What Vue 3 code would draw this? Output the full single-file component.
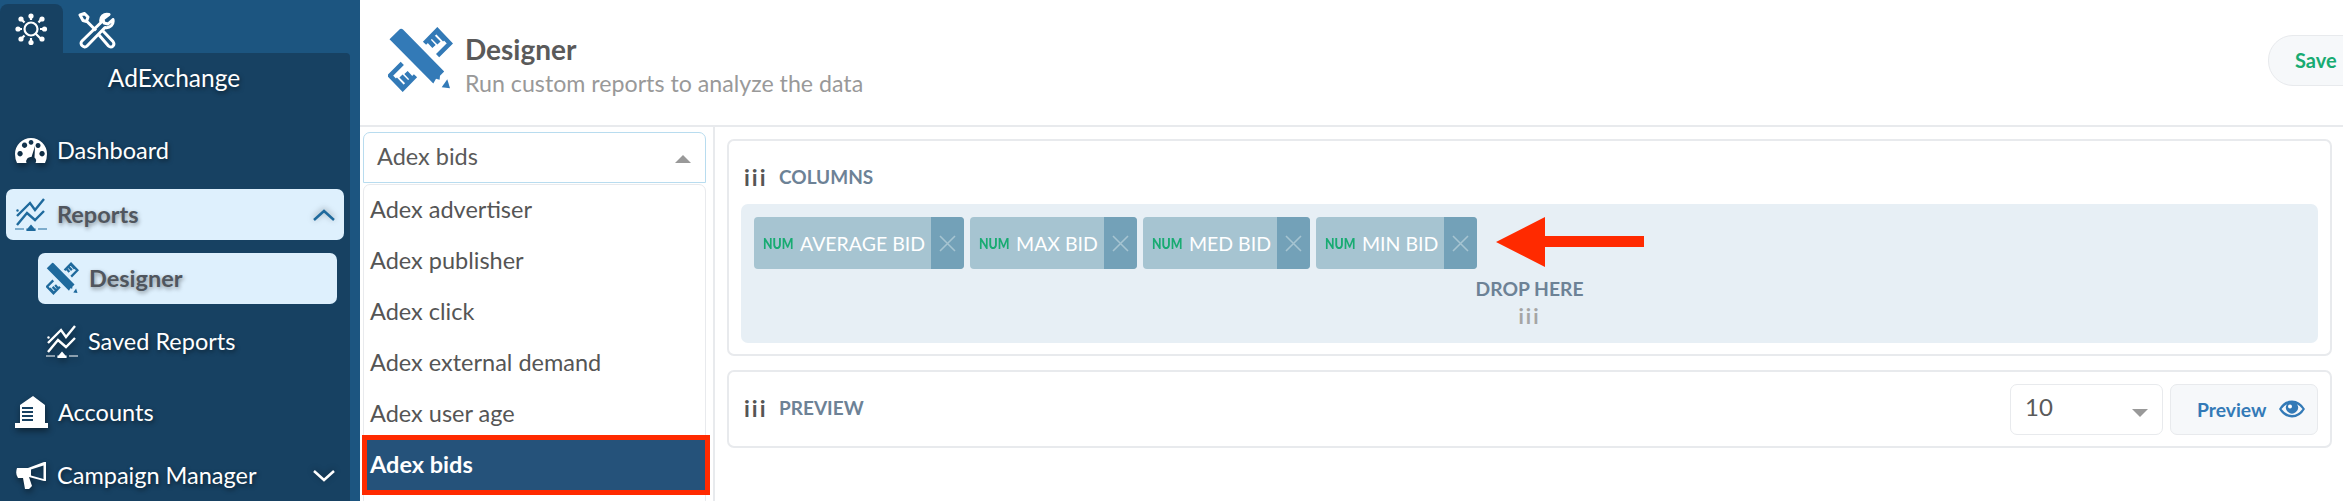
<template>
  <div class="page">
    <svg class="sprite" aria-hidden="true">
      <symbol id="i-chart" viewBox="0 0 32 33">
        <path d="M2 18 15 5l5 7 9-11M2 27l10-12 8 7 9-9" fill="none" stroke="currentColor" stroke-width="2.4" />
        <circle cx="2.5" cy="12.5" r="1.2" fill="currentColor" />
        <path d="M0 31h9M23 31h9M12 31h8v1.6h-8zM16 27.5l3 3.5h-6z" fill="currentColor" stroke="currentColor" stroke-width="1.2" />
      </symbol>
      <symbol id="i-designer" viewBox="0 0 65 65">
        <path d="M12 2 1.500 12.300 45.300 56.500l2.700-4.700 3.600 1 .4-4 4.200-4.400L15 2.600a2.500 2.500 0 0 0-3-.6z" fill="currentColor" />
        <path d="m62 61.300-8.300-1 5.600-8z" fill="currentColor" />
        <path d="M36.500 16.300 49.300 3.200l12.600 13.200-12.300 12.300M44 9l7 7M48.700 4.500l8 8.500M40 13l6 6.500M27.500 48.700 14.700 61.800 2 48.600l12.300-12.300M20 56l-7-7M15.300 60.500l-8-8.500M24 52l-6-6.500" fill="none" stroke="currentColor" stroke-width="4.500" />
      </symbol>
    </svg>

    <aside class="sidebar">
      <div class="tabs">
        <div class="tab active">
          <svg width="33" height="33" viewBox="0 0 33 33" fill="none" stroke="#fff" stroke-width="2.200">
            <circle cx="16" cy="16" r="6.500" />
            <path d="m20.500 20.500 3 3M16 7V4M16 28v-3M7 16H4M28 16h-3M9.500 9.500 7 7M26 26l-2.500-2.500M9.500 22.500 7 25M26 6.500l-2.500 3" />
            <g fill="#fff" stroke="none">
              <circle cx="16" cy="3" r="2.600" /><circle cx="16" cy="29.500" r="2.600" /><circle cx="3" cy="16" r="2.600" /><circle cx="29.500" cy="16" r="2.600" />
              <circle cx="6" cy="6" r="2.600" /><circle cx="27" cy="6" r="2.600" /><circle cx="6" cy="26" r="2.600" /><circle cx="27" cy="26" r="2.600" />
            </g>
          </svg>
        </div>
        <div class="tab">
          <svg width="38" height="38" viewBox="0 0 38 38" fill="none" stroke="#fff" stroke-width="3" stroke-linejoin="round">
            <path d="M2 3 6.500 1.500 10 5l-1.500 4.500L5 8.500zM9 9.500l9 9M31 2.500c-5-1.500-9.500 2.500-8 8L4 29c-3 3 2 8 5 5l18-18.500c5 1 9-3 8-8l-5 4.500-4-1-1-4z" />
            <path d="m21 23 9.500 11c3 3 7-1 4.500-4.500L25 19" />
          </svg>
        </div>
      </div>

      <div class="panel">
        <div class="brand">AdExchange</div>
        <nav class="menu">
          <div class="row">
            <svg class="ico" width="32" height="27" viewBox="0 0 32 27">
              <path fill="#fff" fill-rule="evenodd" d="M2 26Q0 22 0 17a16 16 0 0 1 32 0q0 5-2 9h-9.500a4.500 4.500 0 0 0-1-5.500L20 9l-3.500 11A4.500 4.500 0 0 0 11.500 26zM5 14a2.700 2.700 0 1 0 .1 0zM9.500 5.500a2.700 2.700 0 1 0 .1 0zM16 3a2.400 2.400 0 1 0 .1 0zM23 6a2.500 2.500 0 1 0 .1 0zM27 14a2.700 2.700 0 1 0 .1 0z" />
            </svg>
            <span>Dashboard</span>
          </div>
          <div class="row current">
            <svg class="ico blue" width="32" height="33"><use href="#i-chart" /></svg>
            <span>Reports</span>
            <svg class="chev" width="22" height="12" viewBox="0 0 22 12" fill="none" stroke="#1f6a9d" stroke-width="2.500"><path d="m1 11 10-9 10 9" /></svg>
          </div>
          <div class="row sub current">
            <svg class="ico blue" width="33" height="33"><use href="#i-designer" /></svg>
            <span>Designer</span>
          </div>
          <div class="row sub saved">
            <svg class="ico" width="32" height="33"><use href="#i-chart" /></svg>
            <span>Saved Reports</span>
          </div>
          <div class="row accounts">
            <svg class="ico" width="33" height="33" viewBox="0 0 33 33">
              <path fill="#fff" d="M5 9 18 0l12 9v18H5zM0 27h33v5H0z" />
              <path d="M7 12h11M7 16h11M7 20h11M7 24h11" stroke="#174162" stroke-width="1.800" />
            </svg>
            <span>Accounts</span>
          </div>
          <div class="row">
            <svg class="ico" width="32" height="28" viewBox="0 0 32 28">
              <path fill="#fff" fill-rule="evenodd" d="M2 6h11L29 0h2v19h-2L14 15l3 9-3 3h-4l-2-11H3q-3-4-1-10zM16 7.500v6L28.500 17V3.500z" />
            </svg>
            <span>Campaign Manager</span>
            <svg class="chev" width="22" height="12" viewBox="0 0 22 12" fill="none" stroke="#fff" stroke-width="2.500"><path d="m1 1 10 9 10-9" /></svg>
          </div>
        </nav>
      </div>
    </aside>

    <main class="main">
      <header class="head">
        <svg class="head-ico" width="65" height="65"><use href="#i-designer" /></svg>
        <div class="head-text">
          <h1>Designer</h1>
          <p>Run custom reports to analyze the data</p>
        </div>
        <button class="save">Save</button>
      </header>

      <div class="body">
        <div class="sources">
          <div class="select open">Adex bids<i class="caret up"></i></div>
          <ul class="list">
            <li v-for="s in sources" :key="s" :class="{ selected: s === picked }">{{ s }}</li>
          </ul>
        </div>

        <div class="content">
          <section class="card columns">
            <div class="title"><span class="grip">iii</span>COLUMNS</div>
            <div class="zone">
              <div class="chips">
                <div v-for="c in columns" :key="c" class="chip">
                  <b>NUM</b>
                  <span class="name">{{ c }}</span>
                  <span class="x">
                    <svg width="17" height="17" viewBox="0 0 17 17" stroke="#a6c4d1" stroke-width="1.600"><path d="m1 1 15 15M16 1 1 16" /></svg>
                  </span>
                </div>
              </div>
              <div class="drop">DROP HERE</div>
              <div class="grip small">iii</div>
              <svg class="arrow" width="148" height="50" viewBox="0 0 148 50">
                <path fill="#ff2a00" d="M0 25 49 0v19h99v11H49v20z" />
              </svg>
            </div>
          </section>

          <section class="card preview">
            <div class="title"><span class="grip">iii</span>PREVIEW</div>
            <div class="select limit">10<i class="caret"></i></div>
            <button class="run">
              Preview
              <svg width="26" height="18" viewBox="0 0 26 18">
                <path fill="#337ab7" fill-rule="evenodd" d="M0 9q5-8.500 13-8.500T26 9q-5 8.500-13 8.500T0 9zm2.500 0q4.500 6 10.500 6t10.500-6q-2-3-5.500-4.800a6 6 0 1 1-10 0Q4.500 6 2.500 9z" />
                <circle cx="11" cy="6.500" r="2" fill="#fff" />
              </svg>
            </button>
          </section>
        </div>
      </div>
    </main>
  </div>
</template>

<script setup>
const picked = 'Adex bids'
const sources = ['Adex advertiser', 'Adex publisher', 'Adex click', 'Adex external demand', 'Adex user age', 'Adex bids']
const columns = ['AVERAGE BID', 'MAX BID', 'MED BID', 'MIN BID']
</script>

<style>
html, body {
  margin: 0;
  background: #fff;
}
</style>

<style scoped>
.page {
  display: flex;
  width: 2343px;
  height: 501px;
  overflow: hidden;
  font-family: Lato, "Open Sans", sans-serif;
  color: #555;
}

.sprite {
  display: none;
}

/* sidebar */
.sidebar {
  width: 360px;
  flex: none;
  display: flex;
  flex-direction: column;
  background: #1c5580;
}

.tabs {
  display: flex;
  height: 49px;
  padding-top: 4px;
}

.tab {
  width: 63px;
  display: flex;
  justify-content: center;
  padding-top: 9px;
  border-radius: 8px 8px 0 0;
}

.tab + .tab {
  padding-top: 8px;
  margin-left: 5px;
  width: 58px;
}

.tab.active {
  background: #174162;
}

.panel {
  width: 350px;
  flex: 1;
  background: #174162;
  color: #fff;
  border-radius: 0 4px 0 0;
}

.brand {
  height: 72px;
  padding-top: 9px;
  box-sizing: border-box;
  width: 348px;
  text-align: center;
  font-size: 24.5px;
  line-height: 32px;
  text-shadow: 1px 2px 4px rgba(0, 0, 0, 0.5);
}

.menu {
  display: flex;
  flex-direction: column;
  gap: 13px;
  padding-left: 6px;
}

.row {
  height: 51px;
  width: 338px;
  box-sizing: border-box;
  display: flex;
  align-items: center;
  padding-left: 9px;
  border-radius: 7px;
  font-size: 23.5px;
  text-shadow: 1px 2px 4px rgba(0, 0, 0, 0.5);
}

.row span {
  margin-left: 10px;
  position: relative;
  top: -1px;
}

.ico {
  flex: none;
  color: #fff;
  filter: drop-shadow(1px 3px 3px rgba(0, 0, 0, 0.45));
}

.ico.blue {
  color: #1f6a9d;
  filter: none;
}

.chev {
  margin-left: auto;
  margin-right: 9px;
  filter: drop-shadow(0 -1px 3px rgba(0, 0, 0, 0.35));
}

.row.current {
  background: #def0fd;
  color: #50565e;
  font-weight: 700;
  text-shadow: 1px 2px 4px rgba(0, 0, 0, 0.4);
}

.row.sub {
  width: 299px;
  margin-left: 32px;
  padding-left: 8px;
}

.row.saved {
  margin-top: -1px;
}

.row.accounts {
  margin-top: 7px;
  margin-bottom: -1px;
}

/* header */
.main {
  flex: 1;
  min-width: 0;
  display: flex;
  flex-direction: column;
}

.head {
  height: 127px;
  flex: none;
  display: flex;
  align-items: center;
  padding-left: 28px;
  border-bottom: 2px solid #e8eaed;
  box-sizing: border-box;
}

.head-ico {
  color: #337ab7;
  flex: none;
  margin-top: -6px;
  margin-right: 12px;
}

.head-text {
  margin-top: 4px;
}

h1 {
  margin: 0;
  font-size: 28px;
  line-height: 36px;
  font-weight: 700;
  color: #5a5a5a;
}

.head p {
  margin: 0;
  font-size: 23.2px;
  line-height: 32px;
  color: #999;
}

.save {
  margin-left: auto;
  margin-top: -5px;
  margin-right: -35px;
  width: 110px;
  height: 51px;
  box-sizing: border-box;
  padding: 0 0 0 26px;
  text-align: left;
  border: 1px solid #e8eaed;
  border-radius: 25px;
  background: #f6f8fa;
  color: #18ab72;
  font: 700 20px Lato, sans-serif;
}

/* left column */
.body {
  flex: 1;
  display: flex;
  min-height: 0;
}

.sources {
  width: 355px;
  flex: none;
  box-sizing: border-box;
  padding: 5px 7px 0 3px;
  border-right: 2px solid #e8eaed;
}

.select {
  position: relative;
  height: 51px;
  box-sizing: border-box;
  display: flex;
  align-items: center;
  padding-bottom: 4px;
  border: 1px solid #e8eaed;
  border-radius: 7px;
  font-size: 23.5px;
  color: #5a5a5a;
}

.select.open {
  border-color: #b8dcef;
  padding-left: 13px;
  border-radius: 7px 7px 0 0;
}

.caret {
  position: absolute;
  right: 14px;
  top: 50%;
  margin-top: -3px;
  border-left: 8px solid transparent;
  border-right: 8px solid transparent;
  border-top: 8px solid #999;
}

.caret.up {
  border-top: 0;
  border-bottom: 8px solid #999;
}

.list {
  list-style: none;
  margin: 1px 0 0;
  padding: 0;
  height: 320px;
  border: 1px solid #e8eaed;
  border-radius: 7px 7px 0 0;
}

.list li {
  position: relative;
  height: 51px;
  line-height: 49px;
  padding-left: 6px;
  font-size: 23.5px;
}

.list li.selected {
  background: #25527a;
  color: #fff;
  font-weight: 700;
}

/* red annotation round the picked row */
.list li.selected::after {
  content: "";
  position: absolute;
  left: -2px;
  right: -5px;
  top: -5px;
  bottom: -4px;
  border: 5px solid #ff2a00;
}

/* right column */
.content {
  flex: 1;
  min-width: 0;
  display: flex;
  flex-direction: column;
  gap: 14px;
  padding: 12px 11px 0 12px;
}

.card {
  border: 2px solid #e8eaed;
  border-radius: 7px;
  box-sizing: border-box;
}

.columns {
  height: 217px;
  padding: 0 12px;
}

.title {
  display: flex;
  align-items: center;
  font-size: 19px;
  font-weight: 700;
  color: #6d8296;
}

.columns .title {
  height: 63px;
  padding-top: 8px;
  box-sizing: border-box;
}

.grip {
  width: 38px;
  padding-left: 3px;
  box-sizing: border-box;
  font-size: 23px;
  font-weight: 700;
  letter-spacing: 2px;
  color: #555;
}

.zone {
  position: relative;
  height: 139px;
  box-sizing: border-box;
  padding: 13px;
  background: #e7eff5;
  border-radius: 7px;
  text-align: center;
}

.chips {
  display: flex;
  gap: 6px;
}

.chip {
  height: 52px;
  display: flex;
  align-items: center;
  padding-left: 9px;
  background: #a6c4d1;
  border-radius: 4px;
  overflow: hidden;
  color: #fff;
  font-size: 19.500px;
}

/* the type tag is condensed in the original, squeeze it */
.chip b {
  width: 27px;
  font-size: 15px;
  font-weight: 900;
  color: #18ab72;
  transform: scaleX(0.82);
  transform-origin: left center;
}

.name {
  margin: 0 6px 0 10px;
}

.x {
  width: 33px;
  align-self: stretch;
  display: flex;
  align-items: center;
  justify-content: center;
  background: #73a1b8;
}

.drop {
  margin-top: 8px;
  font-size: 19.300px;
  line-height: 24px;
  font-weight: 700;
  color: #6d8296;
}

.grip.small {
  width: auto;
  padding: 0;
  margin-top: 0;
  font-size: 21px;
  line-height: 30px;
  color: #a5a5a5;
}

.arrow {
  position: absolute;
  left: 755px;
  top: 13px;
}

.preview {
  height: 78px;
  display: flex;
  align-items: center;
  padding: 0 12px;
}

.preview .title {
  flex: 1;
  padding-bottom: 3px;
}

.limit {
  width: 153px;
  padding-left: 14px;
  padding-bottom: 6px;
  font-size: 24px;
  border-width: 1px;
}

.limit .caret {
  margin-top: 0;
}

.run {
  width: 148px;
  height: 51px;
  margin-left: 7px;
  display: flex;
  align-items: center;
  justify-content: space-between;
  padding: 0 12px 0 26px;
  box-sizing: border-box;
  border: 1px solid #e8eaed;
  border-radius: 7px;
  background: #f6f8fa;
  color: #337ab7;
  font: 700 19.300px Lato, sans-serif;
}
</style>
